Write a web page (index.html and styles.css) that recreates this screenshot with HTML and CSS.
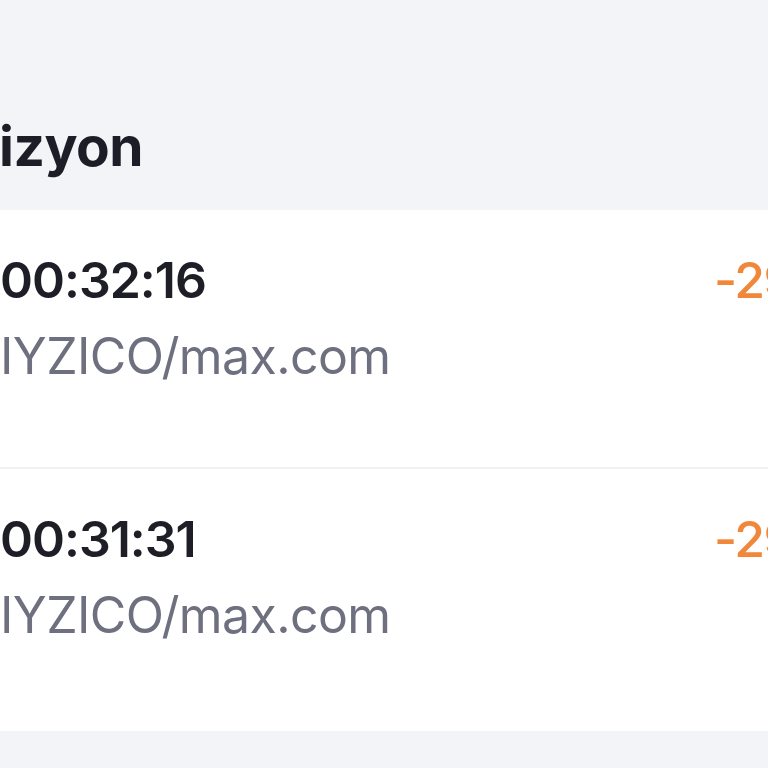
FILE: index.html
```html
<!DOCTYPE html>
<html lang="tr">
<head>
<meta charset="utf-8">
<title>Televizyon</title>
<link rel="stylesheet" href="styles.css">
</head>
<body>
<div class="page">
  <header class="header">
    <h1 class="title">izyon</h1>
  </header>
  <section class="card">
    <div class="row">
      <div class="info">
        <div class="time">00:32:16</div>
        <div class="merchant">IYZICO/max.com</div>
      </div>
      <div class="amount">-29,99 TL</div>
    </div>
    <div class="row">
      <div class="info">
        <div class="time">00:31:31</div>
        <div class="merchant">IYZICO/max.com</div>
      </div>
      <div class="amount">-29,99 TL</div>
    </div>
  </section>
</div>
</body>
</html>
```

FILE: styles.css
```css
html, body {
  margin: 0;
  padding: 0;
  background: #f3f4f8;
  overflow: hidden;
}
.page {
  width: 768px;
  height: 768px;
  overflow: hidden;
  font-family: Inter, "Noto Sans", sans-serif;
}
.header {
  height: 210px;
  display: flex;
  align-items: flex-end;
}
.title {
  margin: 0 0 24px -1px;
  font-size: 55px;
  font-weight: 700;
  color: #1c1d26;
  line-height: 80px;
  letter-spacing: -0.5px;
}
.card {
  background: #ffffff;
  padding-bottom: 3px;
}
.row {
  display: flex;
  height: 259px;
  box-sizing: border-box;
  padding-top: 33px;
  border-bottom: 2px solid #f1f1f3;
}
.row:last-child {
  border-bottom: none;
}
.info {
  flex: 1;
}
.time {
  font-size: 50px;
  font-weight: 600;
  color: #1d1e26;
  line-height: 75px;
  letter-spacing: -1px;
}
.merchant {
  font-size: 50px;
  font-weight: 400;
  color: #6e7080;
  line-height: 77px;
  letter-spacing: -0.6px;
}
.amount {
  width: 54px;
  white-space: nowrap;
  font-size: 50px;
  font-weight: 500;
  color: #f0873a;
  line-height: 75px;
  letter-spacing: -1.5px;
}
```
